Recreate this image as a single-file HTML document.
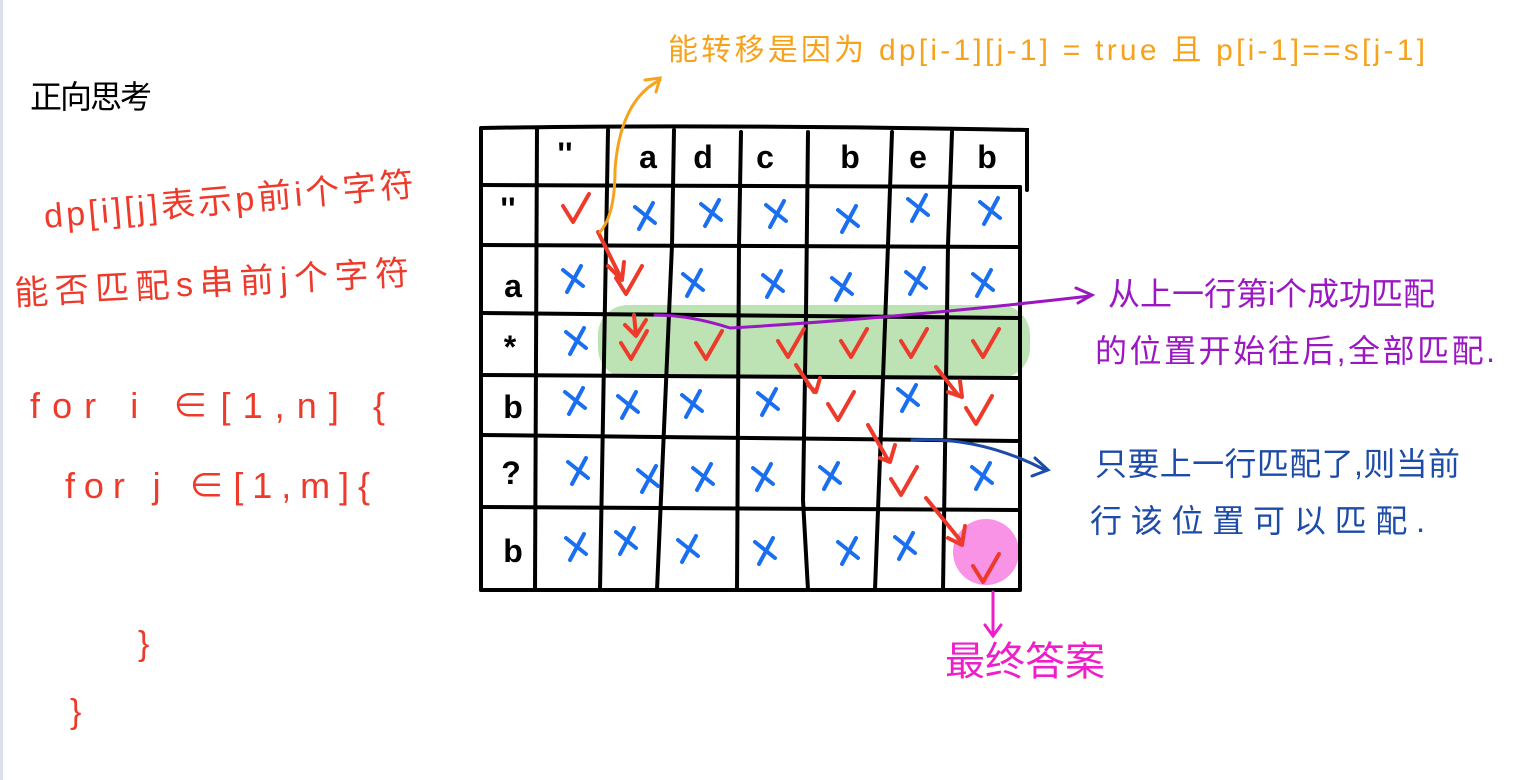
<!DOCTYPE html>
<html><head><meta charset="utf-8"><style>
html,body{margin:0;padding:0;background:#fff;}
body{width:1536px;height:780px;overflow:hidden;position:relative;}
svg{position:absolute;left:0;top:0;}
text{font-family:"Liberation Sans","Noto Sans CJK SC",sans-serif;}
</style></head><body>
<svg width="1536" height="780" viewBox="0 0 1536 780">
<line x1="1.5" y1="0" x2="1.5" y2="780" stroke="#dde0ea" stroke-width="3"/>
<rect x="598" y="305" width="432" height="73" rx="30" fill="#bde2b3"/>
<circle cx="986" cy="552" r="33" fill="#f893e6"/>
<g stroke="#000" stroke-width="4" fill="none" stroke-linecap="round">
<path d="M482 128 Q700 124 1027 130 L1027 190"/>
<line x1="481" y1="128" x2="481" y2="590"/>
<line x1="481" y1="185" x2="1020" y2="187"/>
<line x1="481" y1="245" x2="1020" y2="247"/>
<line x1="481" y1="313" x2="1020" y2="318"/>
<line x1="481" y1="375" x2="1020" y2="378"/>
<line x1="481" y1="435" x2="1020" y2="441"/>
<line x1="481" y1="507" x2="1020" y2="510"/>
<line x1="481" y1="590" x2="1020" y2="590"/>
<line x1="1020" y1="187" x2="1020" y2="590"/>
<path d="M537 128 L535 590"/>
<path d="M608 130 L606 245 L600 590"/>
<path d="M674 130 L672 245 L657 590"/>
<path d="M741 132 L739 245 L737 590"/>
<path d="M808 132 L806 313 L803 500 L808 590"/>
<path d="M892 132 L888 245 L875 590"/>
<path d="M952 132 L948 245 L943 590"/>
</g>
<g font-size="32" fill="#000" text-anchor="middle" font-weight="bold">
<text x="565" y="165">''</text><text x="648" y="168">a</text><text x="703" y="168">d</text><text x="765" y="168">c</text><text x="850" y="168">b</text><text x="918" y="168">e</text><text x="987" y="168">b</text>
<text x="508" y="220">''</text><text x="513" y="297">a</text><text x="510" y="358">*</text><text x="513" y="418">b</text><text x="511" y="484">?</text><text x="513" y="562">b</text>
</g>
<g stroke="#1a6ff0" stroke-width="4" fill="none" stroke-linecap="round">
<defs><path id="x" d="M-10 -8 L10 8 M8 -12 L-6 14"/></defs>
<use href="#x" x="645" y="215"/><use href="#x" x="711" y="212"/><use href="#x" x="776" y="213"/><use href="#x" x="848" y="218"/><use href="#x" x="918" y="207"/><use href="#x" x="990" y="210"/>
<use href="#x" x="573" y="278"/><use href="#x" x="693" y="282"/><use href="#x" x="773" y="283"/><use href="#x" x="842" y="286"/><use href="#x" x="916" y="280"/><use href="#x" x="983" y="282"/>
<use href="#x" x="576" y="340"/>
<use href="#x" x="575" y="400"/><use href="#x" x="628" y="404"/><use href="#x" x="692" y="403"/><use href="#x" x="768" y="401"/><use href="#x" x="908" y="397"/>
<use href="#x" x="578" y="470"/><use href="#x" x="648" y="478"/><use href="#x" x="703" y="476"/><use href="#x" x="763" y="476"/><use href="#x" x="830" y="475"/><use href="#x" x="982" y="475"/>
<use href="#x" x="576" y="546"/><use href="#x" x="626" y="540"/><use href="#x" x="688" y="548"/><use href="#x" x="765" y="550"/><use href="#x" x="848" y="550"/><use href="#x" x="905" y="545"/>
</g>
<g stroke="#ee3a2a" stroke-width="4" fill="none" stroke-linecap="round" stroke-linejoin="round">
<defs><path id="c" d="M-12 -4 L-2 12 L14 -16"/></defs>
<use href="#c" x="575" y="210"/><use href="#c" x="628" y="282"/>
<use href="#c" x="633" y="347"/><use href="#c" x="708" y="347"/><use href="#c" x="790" y="345"/><use href="#c" x="853" y="345"/><use href="#c" x="913" y="345"/><use href="#c" x="985" y="345"/>
<use href="#c" x="840" y="408"/><use href="#c" x="978" y="412"/>
<use href="#c" x="903" y="483"/><use href="#c" x="985" y="570"/>
<path d="M598 232 L622 280 M608 266 L622 280 L624 262"/>
<path d="M634 315 L636 335 M625 325 L636 336 L646 320"/>
<path d="M796 365 L814 392 M808 385 L816 392 L820 378"/>
<path d="M936 367 L958 395 M948 392 L962 397 L960 381"/>
<path d="M868 425 L888 460 M880 458 L890 462 L895 445"/>
<path d="M926 498 L960 540 M948 538 L962 545 L965 526"/>
</g>
<g fill="none" stroke-width="3" stroke-linecap="round">
<path d="M600 232 Q615 215 615 170 Q620 100 660 80 M645 80 L660 78 L656 92" stroke="#f7a21b"/>
<path d="M655 315 Q690 315 730 328 Q900 318 1090 296 M1076 288 L1092 295 L1078 303" stroke="#9a17c2"/>
<path d="M912 440 Q980 436 1045 470 M1035 458 L1048 470 L1032 476" stroke="#1d4ba8"/>
<path d="M993 592 L993 635 M985 625 L993 636 L1001 625" stroke="#ee1ec9"/>
</g>
<text x="30" y="108" font-size="32" fill="#000" letter-spacing="-2">正向思考</text>
<g fill="#ee3a2a">
<text x="45" y="228" font-size="34" letter-spacing="4" textLength="375" transform="rotate(-5 45 228)">dp[i][j]表示p前i个字符</text>
<text x="15" y="305" font-size="34" textLength="395" transform="rotate(-3 15 305)">能否匹配s串前j个字符</text>
<text x="30" y="418" font-size="36" textLength="355">for  i ∈[1,n] {</text>
<text x="65" y="498" font-size="36" textLength="305">for  j ∈[1,m]{</text>
<text x="138" y="655" font-size="34">}</text>
<text x="70" y="723" font-size="34">}</text>
</g>
<text x="668" y="60" font-size="30" fill="#f7a21b" textLength="757">能转移是因为 dp[i-1][j-1] = true 且 p[i-1]==s[j-1]</text>
<text x="1108" y="305" font-size="32" fill="#9a17c2" textLength="327">从上一行第i个成功匹配</text>
<text x="1095" y="362" font-size="32" fill="#9a17c2" textLength="400">的位置开始往后,全部匹配.</text>
<text x="1095" y="475" font-size="32" fill="#1d4ba8" textLength="365">只要上一行匹配了,则当前</text>
<text x="1090" y="532" font-size="32" fill="#1d4ba8" textLength="335">行该位置可以匹配.</text>
<text x="945" y="675" font-size="40" fill="#ee1ec9">最终答案</text>
</svg>
</body></html>
